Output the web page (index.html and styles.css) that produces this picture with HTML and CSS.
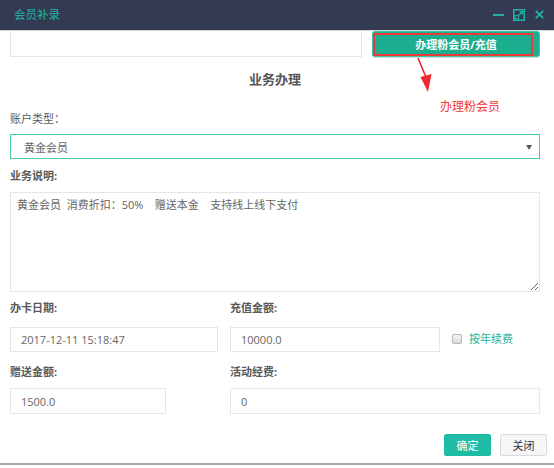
FILE: index.html
```html
<!DOCTYPE html>
<html lang="zh-CN">
<head>
<meta charset="utf-8">
<title>会员补录</title>
<link rel="stylesheet" href="styles.css">
</head>
<body>
<div class="win">
  <header class="titlebar">
    <span class="title">会员补录</span>
    <div class="ctrls">
      <svg class="ic ic-min" width="11" height="12" viewBox="0 0 11 12"><rect x="0" y="5" width="11" height="2" fill="currentColor"/></svg>
      <svg class="ic ic-max" width="12" height="12" viewBox="0 0 12 12" fill="none" stroke="currentColor"><rect x="0.75" y="0.75" width="10.5" height="10.5" stroke-width="1.5"/><rect x="2" y="6.5" width="3.5" height="3.5" stroke-width="1.2"/><path d="M5.5 6.5 L9.5 2.5 M6.5 2.5 H9.5 V5.5" stroke-width="1.2"/></svg>
      <svg class="ic ic-close" width="9" height="9" viewBox="0 0 9 9" stroke="currentColor" stroke-width="1.8"><path d="M0.8 0.8 L8.2 8.2 M8.2 0.8 L0.8 8.2"/></svg>
    </div>
  </header>
  <main class="content">
    <div class="toprow">
      <div class="top-input"></div>
      <div class="pink-wrap">
        <button class="btn-pink" type="button">办理粉会员/充值</button>
        <span class="mark"></span>
        <svg class="arrow" width="20" height="36" viewBox="0 0 20 36"><path d="M1 0 L8.5 18" stroke="#f0282d" stroke-width="1.6" fill="none"/><polygon points="3.5,19 14.5,16 11,34" fill="#f0282d"/></svg>
        <span class="note">办理粉会员</span>
      </div>
    </div>

    <h3 class="section">业务办理</h3>

    <div class="lbl lbl-type">账户类型：</div>
    <div class="select"><span>黄金会员</span><span class="caret">▼</span></div>

    <div class="lbl lbl-b lbl-desc">业务说明:</div>
    <textarea class="ta" readonly>黄金会员  消费折扣：50%    赠送本金    支持线上线下支付</textarea>

    <div class="row row-a">
      <div class="field">
        <div class="lbl lbl-b">办卡日期:</div>
        <input class="inp inp-date" type="text" value="2017-12-11 15:18:47" readonly>
      </div>
      <div class="field">
        <div class="lbl lbl-b">充值金额:</div>
        <div class="inline">
          <input class="inp inp-amount" type="text" value="10000.0" readonly>
          <span class="chk"></span>
          <span class="link">按年续费</span>
        </div>
      </div>
    </div>

    <div class="row row-b">
      <div class="field">
        <div class="lbl lbl-b">赠送金额:</div>
        <input class="inp inp-gift" type="text" value="1500.0" readonly>
      </div>
      <div class="field">
        <div class="lbl lbl-b">活动经费:</div>
        <input class="inp inp-fee" type="text" value="0" readonly>
      </div>
    </div>

    <div class="actions">
      <button class="btn btn-ok" type="button">确定</button>
      <button class="btn btn-close" type="button">关闭</button>
    </div>
  </main>
</div>
</body>
</html>
```

FILE: styles.css
```css
* { box-sizing: border-box; }
html, body { margin: 0; padding: 0; background: #fff; }
body {
  font-family: "Open Sans", "Noto Sans CJK SC", sans-serif;
  font-size: 11px;
  color: #666;
}
.win {
  width: 554px;
  height: 465px;
  border-bottom: 2px solid #a9a9a9;
  display: flex;
  flex-direction: column;
  overflow: hidden;
}
.titlebar {
  height: 31px;
  flex: none;
  background: #353a53;
  border-bottom: 1px solid #d6d6d6;
  display: flex;
  align-items: center;
  justify-content: space-between;
  padding: 0 10px 1px 14px;
}
.title { color: #22b5aa; font-size: 11.5px; line-height: 16px; }
.ctrls { display: flex; align-items: center; color: #1fb0a6; }
.ic { display: block; }
.ic-min { margin-right: 9px; }
.ic-max { margin-right: 10px; }

.content { flex: 1; padding: 0 14px 0 10px; }

.toprow { display: flex; height: 26px; }
.top-input {
  width: 352px;
  height: 26px;
  border: 1px solid #e5e6e7;
  border-top: none;
}
.pink-wrap { position: relative; margin-left: 10px; flex: 1; }
.btn-pink {
  width: 168px;
  height: 26px;
  background: #1aae8f;
  border: 1px solid #3cc4a6;
  border-radius: 3px;
  color: #fff;
  font-family: inherit;
  font-size: 11px;
  font-weight: bold;
  padding: 0;
  box-shadow: 0 1px 1px rgba(0,0,0,0.15);
}
.mark {
  position: absolute;
  left: 1px; top: 2px;
  width: 160px; height: 23px;
  border: 2px solid #ec3a3a;
}
.arrow { position: absolute; left: 45px; top: 27px; }
.note {
  position: absolute;
  left: 68px; top: 68px;
  color: #f0373a;
  font-size: 12px;
  line-height: 16px;
  white-space: nowrap;
}

.section {
  margin: 12px 0 0;
  text-align: center;
  font-size: 13px;
  line-height: 20px;
  font-weight: bold;
  color: #555;
}
.lbl { line-height: 16px; color: #595959; }
.lbl-b { font-weight: bold; }
.lbl-type { margin-top: 22px; }
.select {
  margin-top: 7px;
  height: 25px;
  border: 1px solid #4acaa9;
  display: flex;
  align-items: center;
  justify-content: space-between;
  padding: 0 7px 0 13px;
  color: #666;
}
.caret { font-size: 6px; color: #555; }
.lbl-desc { margin-top: 9px; }
.ta {
  display: block;
  margin-top: 8px;
  width: 100%;
  height: 100px;
  border: 1px solid #e5e6e7;
  font-family: inherit;
  font-size: 11px;
  line-height: 16px;
  color: #666;
  padding: 4px 6px;
  resize: vertical;
  outline: none;
}

.row { display: grid; grid-template-columns: 220px 1fr; }
.row-a { margin-top: 8px; }
.row-a .inp { margin-top: 11px; height: 25px; }
.row-b { margin-top: 12px; }
.row-b .inp { margin-top: 8px; height: 26px; }
.inline { display: flex; align-items: flex-end; }
.inp {
  display: block;
  border: 1px solid #e5e6e7;
  font-family: inherit;
  font-size: 11px;
  color: #666;
  padding: 0 10px;
  outline: none;
  background: #fff;
}
.inp-date { width: 208px; }
.inp-amount { width: 210px; }
.inp-gift { width: 156px; }
.inp-fee { width: 310px; }
.chk {
  width: 10px; height: 10px;
  margin: 0 0 8px 12px;
  border: 1px solid #b5b5b5;
  border-radius: 2px;
  background: linear-gradient(#f4f4f4, #dcdcdc);
}
.link { color: #1fb39b; margin: 0 0 5px 7px; line-height: 16px; }

.actions {
  margin-top: 20px;
  margin-right: -7px;
  display: flex;
  justify-content: flex-end;
  gap: 9px;
}
.btn {
  width: 47px;
  height: 22px;
  font-family: inherit;
  font-size: 11px;
  padding: 0;
  border-radius: 2px;
}
.btn-ok { background: #1fbca5; border: 1px solid #1fbca5; color: #fff; }
.btn-close { background: #f6f6f6; border: 1px solid #dadada; color: #333; }
```
